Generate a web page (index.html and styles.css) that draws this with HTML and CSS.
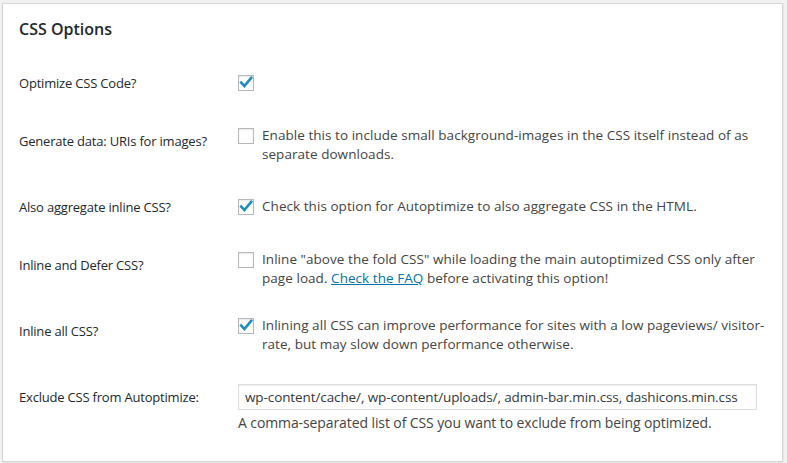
FILE: index.html
```html
<!DOCTYPE html>
<html>
<head>
<meta charset="utf-8">
<link rel="stylesheet" href="styles.css">
</head>
<body>
<div class="card">
  <h2 class="title">CSS Options</h2>
  <div class="form">
    <div class="row">
      <div class="th">Optimize CSS Code?</div>
      <div class="td single">
        <span class="cb checked"><svg viewBox="0 0 16 16" width="16" height="16"><path d="M3.2 7.6 L6.4 11 L13.2 2.8" fill="none" stroke="#1e8cbe" stroke-width="2.6" stroke-linecap="square"/></svg></span>
      </div>
    </div>
    <div class="row">
      <div class="th">Generate data: URIs for images?</div>
      <div class="td multi">
        <label class="opt"><span class="cb"></span><span class="txt">Enable this to include small background-images in the CSS itself instead of as<br>separate downloads.</span></label>
      </div>
    </div>
    <div class="row">
      <div class="th">Also aggregate inline CSS?</div>
      <div class="td single">
        <label class="opt"><span class="cb checked"><svg viewBox="0 0 16 16" width="16" height="16"><path d="M3.2 7.6 L6.4 11 L13.2 2.8" fill="none" stroke="#1e8cbe" stroke-width="2.6" stroke-linecap="square"/></svg></span><span class="txt">Check this option for Autoptimize to also aggregate CSS in the HTML.</span></label>
      </div>
    </div>
    <div class="row">
      <div class="th">Inline and Defer CSS?</div>
      <div class="td multi">
        <label class="opt"><span class="cb"></span><span class="txt">Inline "above the fold CSS" while loading the main autoptimized CSS only after<br>page load. <a href="#" class="link">Check the FAQ</a> before activating this option!</span></label>
      </div>
    </div>
    <div class="row">
      <div class="th">Inline all CSS?</div>
      <div class="td multi">
        <label class="opt"><span class="cb checked"><svg viewBox="0 0 16 16" width="16" height="16"><path d="M3.2 7.6 L6.4 11 L13.2 2.8" fill="none" stroke="#1e8cbe" stroke-width="2.6" stroke-linecap="square"/></svg></span><span class="txt">Inlining all CSS can improve performance for sites with a low pageviews/ visitor-<br>rate, but may slow down performance otherwise.</span></label>
      </div>
    </div>
    <div class="row">
      <div class="th">Exclude CSS from Autoptimize:</div>
      <div class="td field">
        <input class="input" type="text" value="wp-content/cache/, wp-content/uploads/, admin-bar.min.css, dashicons.min.css">
        <div class="desc">A comma-separated list of CSS you want to exclude from being optimized.</div>
      </div>
    </div>
  </div>
</div>
</body>
</html>
```
FILE: styles.css
```css
html, body {
  margin: 0;
  height: 100%;
}
body {
  background: #f1f1f1;
  padding: 3px 4px 0 2px;
  box-sizing: border-box;
  font-family: "Open Sans", "Noto Sans", sans-serif;
  font-size: 13px;
  color: #444;
}
.card {
  background: #fff;
  border: 1px solid #d5d5d5;
  box-shadow: 1px 1px 0 #e6e6e6;
  padding: 14px 16px 14px 16px;
}
.title {
  margin: 0 0 14px 0;
  font-size: 16px;
  line-height: 22px;
  font-weight: 600;
  color: #23282d;
}
.row {
  display: grid;
  grid-template-columns: 209px 1fr;
}
.th {
  padding: 20px 10px 20px 0;
  line-height: 18px;
  font-size: 13px;
  letter-spacing: -0.2px;
  color: #23282d;
}
.td {
  padding: 14px 10px 14px 10px;
  line-height: 19px;
  font-size: 13.5px;
  letter-spacing: 0.05px;
}
.td.single {
  padding: 19px 10px 20px 10px;
}
.td.field {
  padding: 16px 10px 15px 10px;
}
.opt {
  display: flex;
  align-items: flex-start;
  white-space: nowrap;
}
.cb {
  display: block;
  flex: none;
  width: 16px;
  height: 16px;
  box-sizing: border-box;
  border: 1px solid #b4b9be;
  background: #fff;
  box-shadow: inset 0 1px 2px rgba(0,0,0,0.1);
  margin: 2px 8px 0 0;
  position: relative;
}
.cb svg {
  position: absolute;
  left: -1px;
  top: -1px;
}
.td.single > .cb {
  margin-top: 2px;
}
.txt {
  color: #444;
}
.link {
  color: #0073aa;
  text-decoration: underline;
}
.input {
  display: block;
  box-sizing: border-box;
  width: 519px;
  height: 26px;
  margin: 0;
  padding: 0 6px;
  border: 1px solid #ddd;
  box-shadow: inset 0 1px 2px rgba(0,0,0,0.07);
  font-family: "Open Sans", "Noto Sans", sans-serif;
  font-size: 13.5px;
  letter-spacing: -0.1px;
  color: #32373c;
  background: #fff;
}
.desc {
  margin-top: 3px;
  white-space: nowrap;
  font-size: 14px;
  letter-spacing: -0.1px;
  color: #444;
}
```
